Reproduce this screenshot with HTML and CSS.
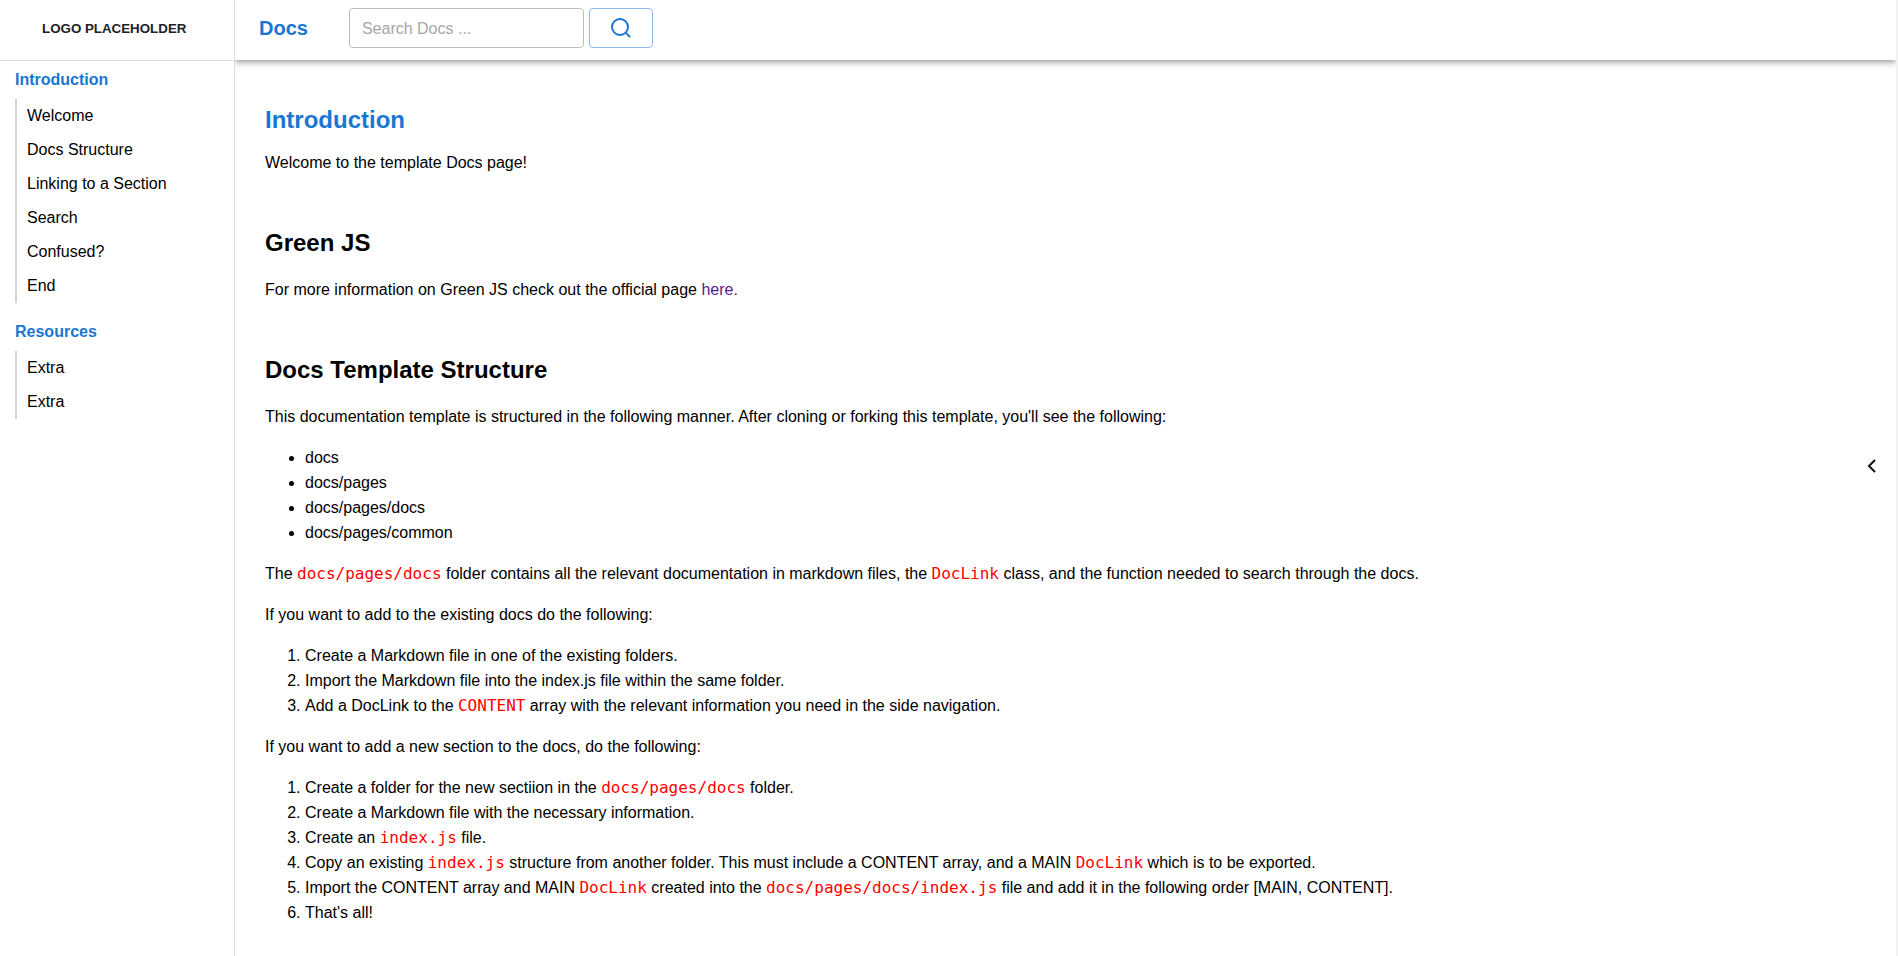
FILE: index.html
```html
<!DOCTYPE html>
<html lang="en">
<head>
<meta charset="utf-8">
<meta name="viewport" content="width=device-width, initial-scale=1">
<title>Docs</title>
<link rel="stylesheet" href="styles.css">
</head>
<body>
<div class="layout">
  <aside class="sidebar">
    <div class="logo">LOGO PLACEHOLDER</div>
    <nav class="nav" aria-label="Docs">
      <a class="nav-title" href="#introduction">Introduction</a>
      <ul class="nav-list">
        <li><a href="#introduction">Welcome</a></li>
        <li><a href="#structure">Docs Structure</a></li>
        <li><a href="#linking">Linking to a Section</a></li>
        <li><a href="#search">Search</a></li>
        <li><a href="#confused">Confused?</a></li>
        <li><a href="#end">End</a></li>
      </ul>
      <a class="nav-title" href="#resources">Resources</a>
      <ul class="nav-list">
        <li><a href="#extra">Extra</a></li>
        <li><a href="#extra-two">Extra</a></li>
      </ul>
    </nav>
  </aside>
  <div class="page">
    <header class="topbar">
      <a class="brand" href="#introduction">Docs</a>
      <form class="search" role="search">
        <input class="search-input" type="text" placeholder="Search Docs ..." aria-label="Search Docs">
        <button class="search-button" type="button" aria-label="Search">
          <svg class="icon" viewBox="0 0 24 24"><circle cx="11" cy="11" r="8"/><path d="M21 21l-4.35-4.35"/></svg>
        </button>
      </form>
    </header>
    <main class="content">
      <section id="introduction">
        <h1 class="main-title">Introduction</h1>
        <p>Welcome to the template Docs page!</p>
      </section>
      <section>
        <h2>Green JS</h2>
        <p>For more information on Green JS check out the official page <a class="link" href="#green">here.</a></p>
      </section>
      <section id="structure">
        <h2>Docs Template Structure</h2>
        <p>This documentation template is structured in the following manner. After cloning or forking this template, you'll see the following:</p>
        <ul>
          <li>docs</li>
          <li>docs/pages</li>
          <li>docs/pages/docs</li>
          <li>docs/pages/common</li>
        </ul>
        <p>The <code>docs/pages/docs</code> folder contains all the relevant documentation in markdown files, the <code>DocLink</code> class, and the function needed to search through the docs.</p>
        <p>If you want to add to the existing docs do the following:</p>
        <ol>
          <li>Create a Markdown file in one of the existing folders.</li>
          <li>Import the Markdown file into the index.js file within the same folder.</li>
          <li>Add a DocLink to the <code>CONTENT</code> array with the relevant information you need in the side navigation.</li>
        </ol>
        <p>If you want to add a new section to the docs, do the following:</p>
        <ol>
          <li>Create a folder for the new sectiion in the <code>docs/pages/docs</code> folder.</li>
          <li>Create a Markdown file with the necessary information.</li>
          <li>Create an <code>index.js</code> file.</li>
          <li>Copy an existing <code>index.js</code> structure from another folder. This must include a CONTENT array, and a MAIN <code>DocLink</code> which is to be exported.</li>
          <li>Import the CONTENT array and MAIN <code>DocLink</code> created into the <code>docs/pages/docs/index.js</code> file and add it in the following order [MAIN, CONTENT].</li>
          <li>That's all!</li>
        </ol>
      </section>
    </main>
  </div>
  <button class="drawer-toggle" type="button" aria-label="Open table of contents">
    <svg class="icon" viewBox="0 0 24 24"><path d="M15 18l-6-6 6-6"/></svg>
  </button>
</div>
</body>
</html>
```
FILE: styles.css
```css
* {
  box-sizing: border-box;
}

body {
  margin: 0;
  color: #000;
  background: #fff;
  font: 16px/25px "Liberation Sans", Arial, sans-serif;
}

a {
  color: inherit;
  text-decoration: none;
}

.layout {
  display: flex;
  min-height: 100vh;
  border-right: 2px solid #f1f1f1;
}

.sidebar {
  flex: none;
  width: 235px;
  border-right: 1px solid #dcdcdc;
}

.logo {
  display: flex;
  align-items: center;
  height: 61px;
  padding: 0 42px 4px;
  border-bottom: 1px solid #dcdcdc;
  color: #212121;
  font-size: smaller;
  font-weight: bold;
  white-space: nowrap;
}

.nav {
  padding: 6px 0 0 15px;
}

.nav-title {
  display: block;
  color: #1976d2;
  font-weight: bold;
  line-height: 26px;
}

.nav-list {
  margin: 6px 0 16px;
  padding: 0 0 0 10px;
  border-left: 2px solid #d3d3d3;
  list-style: none;
  line-height: 34px;
}

.nav-list a {
  display: block;
}

.page {
  flex: 1;
  min-width: 0;
}

.topbar {
  display: flex;
  align-items: center;
  gap: 41px;
  height: 60px;
  padding: 0 24px 4px;
  background: #fff;
  box-shadow: 0 2px 4px -1px rgba(0, 0, 0, 0.2), 0 4px 5px rgba(0, 0, 0, 0.14), 0 1px 10px rgba(0, 0, 0, 0.12);
  clip-path: inset(0 0 -20px 0);
}

.brand {
  color: #1976d2;
  font-size: 20px;
  font-weight: bold;
}

.search {
  display: flex;
  gap: 5px;
}

.search-input,
.search-button {
  height: 40px;
  border: 1px solid #bdbdbd;
  border-radius: 4px;
  background: #fff;
}

.search-input {
  width: 235px;
  padding: 2px 12px 0;
  font: inherit;
}

.search-input::placeholder {
  color: #a6a6a6;
}

.search-button {
  display: flex;
  align-items: center;
  justify-content: center;
  width: 64px;
  padding: 0;
  border-color: #8cbae8;
  color: #1976d2;
}

.icon {
  width: 24px;
  height: 24px;
  fill: none;
  stroke: currentColor;
  stroke-width: 2;
}

.content {
  padding: 42px 30px 16px;
}

h1,
h2 {
  margin: 0 0 16px;
  font-size: 24px;
  line-height: 36px;
}

.main-title {
  margin-bottom: 12px;
  color: #1976d2;
}

section + section {
  margin-top: 50px;
}

p,
.content ul,
.content ol {
  margin: 16px 0 0;
}

h1 + p,
h2 + p {
  margin-top: 0;
}

.content ul,
.content ol {
  padding-left: 40px;
}

.link {
  color: #551a8b;
}

code {
  color: #f00;
  font: 16px/24px "DejaVu Sans Mono", monospace;
}

.drawer-toggle {
  position: fixed;
  top: 454px;
  right: 14px;
  display: flex;
  padding: 0;
  border: 0;
  background: none;
  color: #111;
}
```
